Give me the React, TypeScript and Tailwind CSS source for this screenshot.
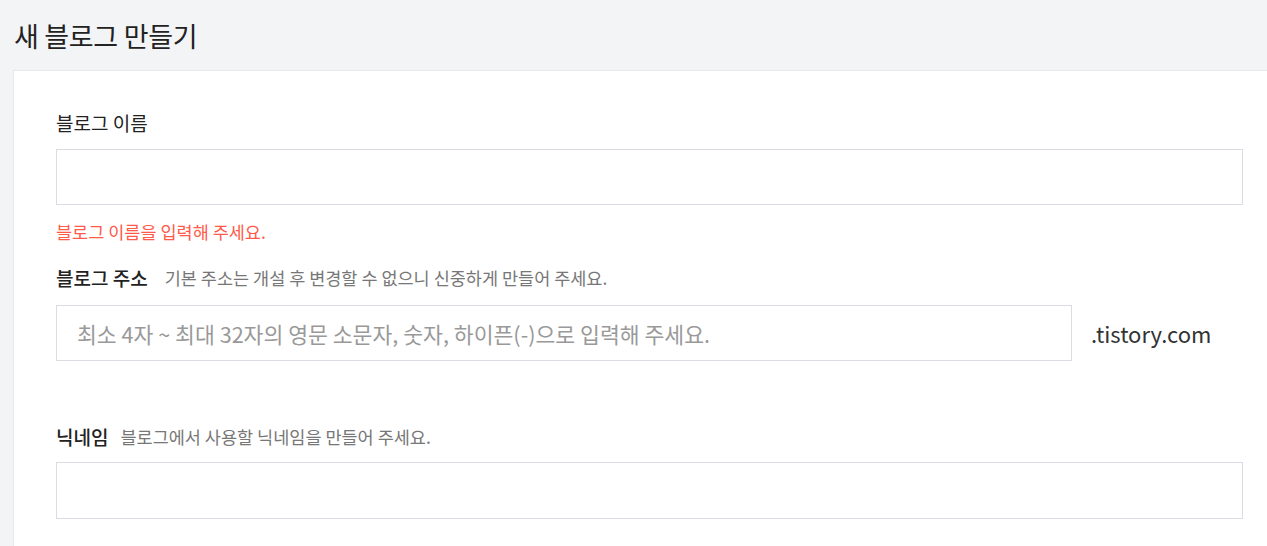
import React from 'react'

const font = { fontFamily: '"Noto Sans CJK KR", "Noto Sans", sans-serif' }

const App: React.FC = () => {
  return (
    <div className="min-h-screen bg-[#f3f4f6] overflow-hidden" style={font}>
      {/* Header */}
      <div className="h-[70px] flex items-center pl-[14px]">
        <h1 className="text-[27px] leading-none text-[#222] font-normal tracking-[-0.3px]">새 블로그 만들기</h1>
      </div>

      {/* Form panel */}
      <div className="ml-[13px] bg-white border-l border-t border-[#e6e8eb] pl-[42px] pr-[24px] pt-[40px] pb-[40px]">
        {/* Blog name */}
        <label className="block text-[19px] leading-[24px] text-[#222]">블로그 이름</label>
        <input
          type="text"
          className="mt-[14px] block w-full h-[56px] border border-[#d9dde3] bg-white px-5 text-[21px] outline-none"
        />
        <p className="mt-[15px] text-[17.5px] leading-[24px] text-[#ff5a4a]">블로그 이름을 입력해 주세요.</p>

        {/* Blog address */}
        <div className="mt-[22px] flex items-center">
          <span className="text-[19px] leading-[24px] font-medium text-[#222]">블로그 주소</span>
          <span className="ml-[17px] text-[17.5px] leading-[24px] text-[#777]">
            기본 주소는 개설 후 변경할 수 없으니 신중하게 만들어 주세요.
          </span>
        </div>
        <div className="mt-[15px] flex items-center">
          <input
            type="text"
            placeholder="최소 4자 ~ 최대 32자의 영문 소문자, 숫자, 하이픈(-)으로 입력해 주세요."
            className="block w-[1016px] h-[56px] border border-[#d9dde3] bg-white pl-[20px] text-[21.6px] text-[#222] placeholder:text-[#999] outline-none"
          />
          <span className="ml-[19px] text-[22px] text-[#333]">.tistory.com</span>
        </div>

        {/* Nickname */}
        <div className="mt-[64px] flex items-center">
          <span className="text-[19px] leading-[24px] font-medium text-[#222]">닉네임</span>
          <span className="ml-[12px] text-[17.5px] leading-[24px] text-[#777]">블로그에서 사용할 닉네임을 만들어 주세요.</span>
        </div>
        <input
          type="text"
          className="mt-[13px] block w-full h-[57px] border border-[#d9dde3] bg-white px-5 text-[21px] outline-none"
        />
      </div>
    </div>
  )
}

export default App
